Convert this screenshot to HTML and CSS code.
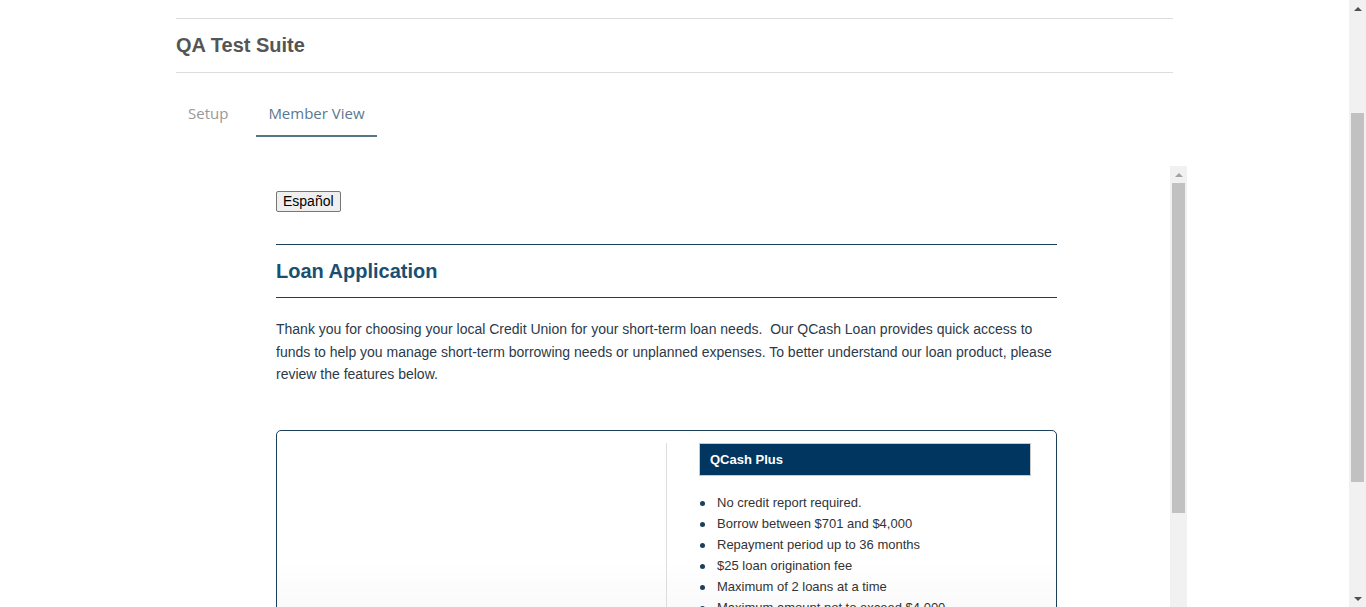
FILE: index.html
```html
<!DOCTYPE html>
<html lang="en">
<head>
<meta charset="utf-8">
<title>QA Test Suite</title>
<link rel="stylesheet" href="styles.css">
</head>
<body>
<div class="viewport">
  <div class="page">
    <header class="suite-header">
      <h1 class="suite-title">QA Test Suite</h1>
    </header>
    <nav class="tabs">
      <a class="tab">Setup</a>
      <a class="tab tab-active">Member View</a>
    </nav>
    <div class="frame">
      <div class="frame-content">
        <button class="lang-btn" type="button">Español</button>
        <div class="app-heading">
          <h2>Loan Application</h2>
        </div>
        <p class="intro">Thank you for choosing your local Credit Union for your short-term loan needs.&nbsp; Our QCash Loan provides quick access to funds to help you manage short-term borrowing needs or unplanned expenses. To better understand our loan product, please review the features below.</p>
        <div class="card">
          <div class="card-left"></div>
          <div class="card-right">
            <div class="product-head">QCash Plus</div>
            <ul class="features">
              <li>No credit report required.</li>
              <li>Borrow between $701 and $4,000</li>
              <li>Repayment period up to 36 months</li>
              <li>$25 loan origination fee</li>
              <li>Maximum of 2 loans at a time</li>
              <li>Maximum amount not to exceed $4,000</li>
            </ul>
          </div>
        </div>
      </div>
      <div class="vscroll frame-scroll">
        <div class="sb-btn"><span class="arrow-up"></span></div>
        <div class="sb-track">
          <div class="sb-thumb frame-thumb"></div>
        </div>
      </div>
    </div>
  </div>
</div>
<div class="vscroll page-scroll">
  <div class="sb-btn"><span class="arrow-up"></span></div>
  <div class="sb-track">
    <div class="sb-thumb page-thumb"></div>
  </div>
  <div class="sb-btn"><span class="arrow-down"></span></div>
</div>
</body>
</html>
```
FILE: styles.css
```css
html, body {
  margin: 0;
  padding: 0;
  background: #fff;
  overflow: hidden;
  height: 607px;
}
body {
  font-family: "Liberation Sans", Arial, sans-serif;
  color: #333;
}
.viewport {
  width: 1349px;
  padding-top: 18px;
}
.page {
  width: 997px;
  margin: 0 auto;
}
.suite-header {
  border-top: 1px solid #dddddd;
  border-bottom: 1px solid #dddddd;
  height: 53px;
  display: flex;
  align-items: center;
}
.suite-title {
  margin: 0 0 1px;
  font-size: 20px;
  font-weight: bold;
  color: #555;
  line-height: 24px;
}
.tabs {
  display: flex;
  gap: 16px;
  margin-top: 18px;
  height: 46px;
}
.tab {
  display: block;
  padding: 0 12px;
  font-family: "Open Sans", "DejaVu Sans", sans-serif;
  font-size: 15px;
  line-height: 44px;
  color: #999;
  border-bottom: 2px solid transparent;
}
.tab-active {
  color: #5b7890;
  border-bottom-color: #577488;
}
.frame {
  margin-top: 29px;
  width: 1011px;
  height: 600px;
  display: flex;
}
.frame-content {
  width: 781px;
  padding: 25px 113px 0 100px;
}
.lang-btn {
  display: block;
  box-sizing: border-box;
  font-family: "Liberation Sans", Arial, sans-serif;
  font-size: 14px;
  line-height: 17px;
  padding: 1px 6px;
  height: 21px;
  color: #000;
  background: #efefef;
  border: 1px solid #767676;
  border-radius: 2px;
}
.app-heading {
  margin-top: 32px;
  border-top: 1px solid #1c3f5a;
  border-bottom: 1px solid #1c3f5a;
  padding: 14px 0 14px;
}
.app-heading h2 {
  margin: 0;
  font-size: 20px;
  line-height: 24px;
  font-weight: bold;
  color: #1b4f72;
}
.intro {
  margin: 20px 0 0;
  font-size: 14px;
  line-height: 22.5px;
  color: #2b3a4a;
}
.card {
  margin-top: 44px;
  border: 1px solid #1c3f5a;
  border-radius: 5px;
  padding-top: 12px;
  display: flex;
  height: 400px;
  background: linear-gradient(to bottom, #ffffff 0, #ffffff 130px, #f7f7f7 200px, #f7f7f7 100%);
}
.card-left {
  width: 389px;
  border-right: 1px solid #dddddd;
}
.card-right {
  flex: 1;
  padding: 0 25px 0 32px;
}
.product-head {
  background: #003660;
  border: 1px solid #c9c9c9;
  color: #fff;
  font-weight: bold;
  font-size: 13px;
  line-height: 31px;
  padding: 0 0 0 10px;
}
.features {
  margin: 16px 0 0;
  padding-left: 18px;
  list-style: none;
}
.features li {
  position: relative;
  font-size: 13px;
  line-height: 21px;
  color: #333;
}
.features li::before {
  content: "";
  position: absolute;
  left: -17px;
  top: 9px;
  width: 5px;
  height: 5px;
  border-radius: 50%;
  background: #1c3f5a;
}

/* drawn scrollbars */
.vscroll {
  width: 17px;
  background: #f1f1f1;
  display: flex;
  flex-direction: column;
  flex-shrink: 0;
}
.page-scroll {
  position: fixed;
  top: 0;
  right: 0;
  height: 607px;
}
.frame-scroll {
  height: 600px;
}
.sb-btn {
  height: 17px;
  display: flex;
  align-items: center;
  justify-content: center;
  flex-shrink: 0;
}
.arrow-up {
  width: 0;
  height: 0;
  border-left: 4px solid transparent;
  border-right: 4px solid transparent;
  border-bottom: 4px solid #a3a3a3;
}
.page-scroll .arrow-up,
.arrow-down {
  border-bottom-color: #505050;
}
.arrow-down {
  width: 0;
  height: 0;
  border-left: 4px solid transparent;
  border-right: 4px solid transparent;
  border-top: 4px solid #505050;
  border-bottom: 0;
}
.sb-track {
  flex: 1;
  padding: 0 2px;
}
.sb-thumb {
  background: #c1c1c1;
}
.page-thumb {
  margin-top: 96px;
  height: 369px;
}
.frame-thumb {
  height: 330px;
}
```
